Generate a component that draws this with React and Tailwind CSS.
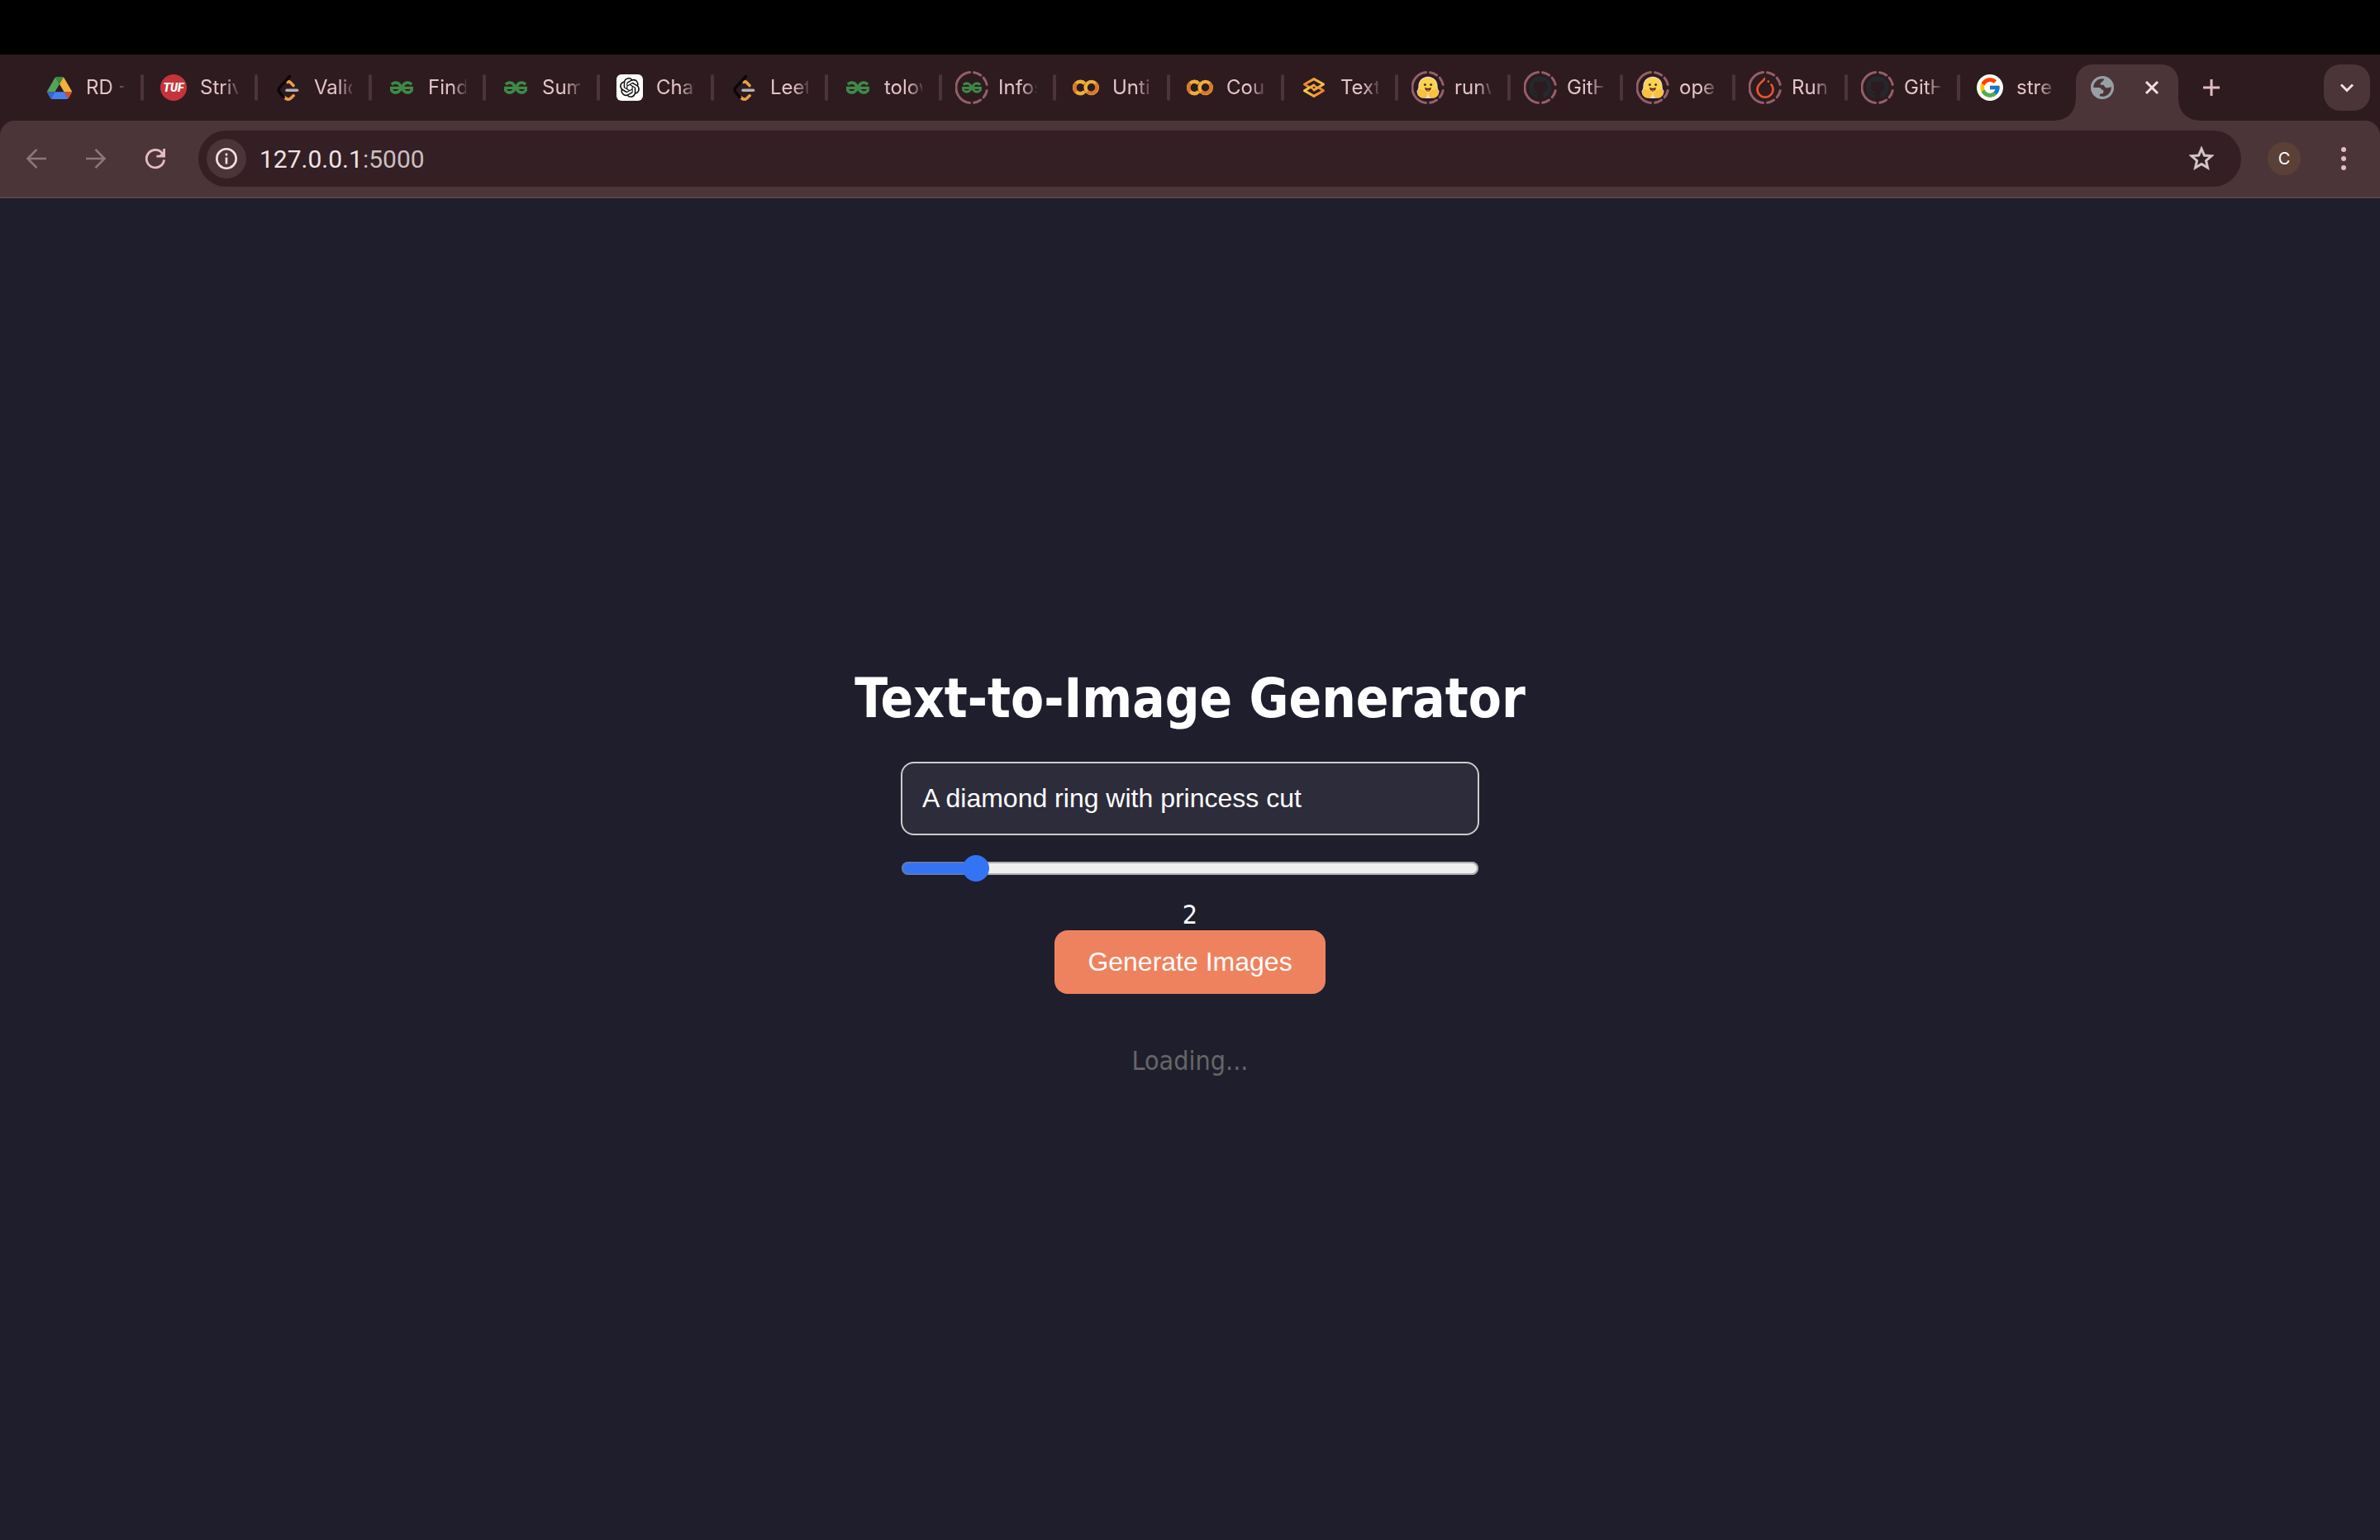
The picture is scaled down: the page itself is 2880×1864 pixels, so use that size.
import { useState } from "react";
import { SiGeeksforgeeks, SiOpenai, SiPytorch } from "react-icons/si";
import { FaGithub } from "react-icons/fa";
import { FcGoogle } from "react-icons/fc";

function DriveIcon() {
  return (
    <svg className="h-[27px] w-[30px]" viewBox="0 0 87.3 78" aria-hidden="true">
      <path d="m6.6 66.85 3.85 6.65c.8 1.4 1.95 2.5 3.3 3.3L27.5 53H0c0 1.55.4 3.1 1.2 4.5z" fill="#3367d6" />
      <path d="M43.65 25 29.9 1.2c-1.35.8-2.5 1.9-3.3 3.3L1.2 48.5A9.06 9.06 0 0 0 0 53h27.5z" fill="#55a35a" />
      <path d="M73.55 76.8c1.35-.8 2.5-1.9 3.3-3.3l9.25-16c.8-1.4 1.2-2.95 1.2-4.5H59.8l5.85 11.5z" fill="#d64c3b" />
      <path d="M43.65 25 57.4 1.2C56.05.4 54.5 0 52.9 0H34.4c-1.6 0-3.15.45-4.5 1.2z" fill="#3b8a4a" />
      <path d="M59.8 53H27.5L13.75 76.8c1.35.8 2.9 1.2 4.5 1.2h50.8c1.6 0 3.15-.45 4.5-1.2z" fill="#4a80ec" />
      <path d="m73.4 26.5-12.7-22c-.8-1.4-1.95-2.5-3.3-3.3L43.65 25 59.8 53h27.45c0-1.55-.4-3.1-1.2-4.5z" fill="#f0b23c" />
    </svg>
  );
}

function TufIcon() {
  return (
    <span className="flex size-8 items-center justify-center rounded-full bg-[#c4343a] font-[Roboto,sans-serif] text-[14px] leading-none font-black text-white italic">
      TUF
    </span>
  );
}

function LeetIcon() {
  return (
    <svg className="size-8" viewBox="0 0 32 32" fill="none" strokeLinecap="round" strokeLinejoin="round" aria-hidden="true">
      <path d="M16 9.400c1.400-.9 2.400-.6 3.400.4l3.600 3.800" stroke="#eba03b" strokeWidth="3.600" />
      <path d="M12.600 28l1.200 1c2 1.600 4.200 1.600 6 0l3.300-3.200" stroke="#eba03b" strokeWidth="3.600" />
      <path d="M18.600 2.400 6.200 16c-1.400 1.700-1.400 3.800 0 5.600l5.200 6.200" stroke="#0c0607" strokeWidth="3.400" />
      <path d="M15 19.300h12.600" stroke="#b3b0b1" strokeWidth="3.600" />
    </svg>
  );
}

function GeeksIcon() {
  return <SiGeeksforgeeks className="size-7 stroke-[#3f8a47] stroke-1 text-[#3f8a47]" aria-hidden="true" />;
}

function ChatIcon() {
  return (
    <span className="flex size-8 items-center justify-center rounded-md bg-white">
      <SiOpenai className="size-6 text-[#111]" aria-hidden="true" />
    </span>
  );
}

function ColabIcon() {
  return (
    <svg className="size-8" viewBox="0 0 32 32" fill="none" strokeWidth="4.400" aria-hidden="true">
      <path d="M14.600 11.200a7.200 7.200 0 1 0 0 9.600" stroke="#efad39" />
      <path d="M4.400 10.900a7.200 7.200 0 0 0 0 10.200" stroke="#d9772c" />
      <circle cx="22.700" cy="16" r="7.100" stroke="#efad39" />
      <path d="M27.700 11a7.100 7.100 0 0 1-10 10" stroke="#d9772c" />
    </svg>
  );
}

function LayersIcon() {
  return (
    <svg className="size-8" viewBox="0 0 32 32" fill="none" strokeWidth="3" strokeLinejoin="round" strokeLinecap="round" aria-hidden="true">
      <defs>
        <linearGradient id="layers-top" x1="0" x2="1" y1="0" y2="0">
          <stop offset="0" stopColor="#ee7f2f" />
          <stop offset="1" stopColor="#f5c63f" />
        </linearGradient>
        <linearGradient id="layers-bottom" x1="0" x2="1" y1="0" y2="0">
          <stop offset="0" stopColor="#f6d040" />
          <stop offset="1" stopColor="#ec7a2d" />
        </linearGradient>
      </defs>
      <path d="M9.500 15.200 4.500 12 16 5.600 27.500 12 16 19" stroke="url(#layers-top)" />
      <path d="M22.500 16.600 27.500 19.800 16 26.400 4.500 19.800 16 13" stroke="url(#layers-bottom)" />
      <path d="m16 13.200 3.600 2.700-3.600 2.700-3.600-2.700z" stroke="#f0a437" strokeWidth="2" />
    </svg>
  );
}

function HuggingIcon() {
  return (
    <svg className="size-[28px]" viewBox="0 0 28 28" aria-hidden="true">
      <path d="M14 .8c6.600 0 11.600 5 11.600 11.600 0 2 .3 3.400 1.300 4.800 1 1.500.6 2.700-.1 3.500.3 1.600-.5 2.800-1.600 3.400-1.400 2.200-4.200 3.200-7.200 2.600-1.400.5-6.600.5-8 0-3 .6-5.800-.4-7.200-2.600-1.100-.6-1.900-1.800-1.600-3.400-.7-.8-1.100-2-.1-3.500 1-1.400 1.300-2.800 1.300-4.800C2.400 5.800 7.400.8 14 .8z" fill="#f0d9c0" />
      <circle cx="14" cy="12.600" r="10.700" fill="#fbd34c" />
      <path d="M3 16.600c1-1 2.500.2 3.600 1.800 1.300-1.400 2.600-.8 2.400.6 2 1.300 4.100 3.700 2.400 6.600-3.600 1.400-7.800.6-8.700-2.300-1.500-.9-1-2.200-.3-2.800-.8-1.500-.4-2.900.6-3.900z" fill="#f9c33c" stroke="#e99f35" strokeWidth=".5" />
      <path d="M25 16.600c-1-1-2.500.2-3.600 1.800-1.300-1.400-2.600-.8-2.400.6-2 1.300-4.100 3.700-2.400 6.600 3.600 1.400 7.800.6 8.700-2.300 1.500-.9 1-2.200.3-2.800.8-1.500.4-2.900-.6-3.900z" fill="#f9c33c" stroke="#e99f35" strokeWidth=".5" />
      <circle cx="10.400" cy="10.400" r="1.500" fill="#4a3a2c" />
      <circle cx="17.600" cy="10.400" r="1.500" fill="#4a3a2c" />
      <path d="M10.200 13.800c2.400 1.400 5.200 1.400 7.600 0 .2 3-1.600 4.900-3.800 4.900s-4-1.900-3.800-4.900z" fill="#5a2f2c" />
      <path d="M11.700 17.300c1.300-1.200 3.300-1.200 4.600 0-1.200 1.600-3.400 1.600-4.600 0z" fill="#ea5f50" />
    </svg>
  );
}

function GoogleIcon() {
  return (
    <span className="flex size-8 items-center justify-center rounded-full bg-white">
      <FcGoogle className="size-[28px]" aria-hidden="true" />
    </span>
  );
}

function GlobeIcon() {
  return (
    <svg className="size-7" viewBox="0 0 28 28" aria-hidden="true">
      <circle cx="14" cy="14" r="12.400" fill="none" stroke="#98a0a5" strokeWidth="3.200" />
      <path d="M16.500 2.500c-.5 2.300-1.500 3.700-3.300 4.800-1.200.8-1.700 1.900-1.500 3.400h3c1.500 0 1.600 1.600 2.600 2.700 1 1.200 2.700.7 4 .8 1.500.1 1.700-1 4.200-1.200A12 12 0 0 0 16.500 2.500z" fill="#98a0a5" />
      <path d="M2.500 14h6.700c2.800 0 3.400 1.500 4 2.600h1.300c1.600 1.600 1 4.300-.5 4.700-1.500.3-2.900 0-3.200.9v3.600A12.400 12.400 0 0 1 2.500 14z" fill="#98a0a5" />
    </svg>
  );
}

function SleepRing({ children }) {
  return (
    <span className="relative flex size-8 items-center justify-center">
      {children}
      <svg className="absolute -inset-1 size-10" viewBox="0 0 40 40" fill="none" stroke="#945f69" strokeWidth="3" strokeLinecap="round" aria-hidden="true">
        <path d="M17.500 1.600a18.500 18.500 0 0 0 0 36.800" />
        <path d="M22.600 1.700a18.500 18.500 0 0 1 8 3.300M34.200 8.200a18.500 18.500 0 0 1 4 8.200M38.200 23.600a18.500 18.500 0 0 1-4 8.200M30.600 35a18.500 18.500 0 0 1-8 3.300" />
      </svg>
    </span>
  );
}

function SleepGeeks() {
  return (
    <SleepRing>
      <SiGeeksforgeeks className="size-6 stroke-[#3f8a47] stroke-1 text-[#3f8a47]" aria-hidden="true" />
    </SleepRing>
  );
}

function SleepHugging() {
  return (
    <SleepRing>
      <HuggingIcon />
    </SleepRing>
  );
}

function SleepGithub() {
  return (
    <SleepRing>
      <FaGithub className="size-7 text-[#23292d]" aria-hidden="true" />
    </SleepRing>
  );
}

function SleepTorch() {
  return (
    <SleepRing>
      <SiPytorch className="size-[26px] text-[#e8532f]" aria-hidden="true" />
    </SleepRing>
  );
}

const wideTabs = [
  ["RD -", DriveIcon],
  ["Striv", TufIcon],
  ["Valid", LeetIcon],
  ["Find", GeeksIcon],
  ["Sum", GeeksIcon],
  ["Chat", ChatIcon],
  ["Leet", LeetIcon],
  ["tolow", GeeksIcon],
  ["Infos", SleepGeeks],
  ["Untit", ColabIcon],
  ["Cou", ColabIcon],
  ["Text", LayersIcon],
];

const narrowTabs = [
  ["runw", SleepHugging],
  ["GitH", SleepGithub],
  ["ope", SleepHugging],
  ["Run", SleepTorch],
  ["GitH", SleepGithub],
  ["stre", GoogleIcon],
];

function Tab({ title, Icon, width, divider = true }) {
  return (
    <div className={`flex h-20 shrink-0 items-center ${width}`}>
      <button type="button" className="flex min-w-0 flex-1 items-center gap-4 pr-5 pl-5 text-left">
        <span className="flex size-8 shrink-0 items-center justify-center">
          <Icon />
        </span>
        <span className="min-w-0 flex-1 overflow-hidden text-[24px] leading-8 whitespace-nowrap text-[#e4c3c9] [mask-image:linear-gradient(to_right,#000_62%,#0003)]">
          {title}
        </span>
      </button>
      <span className={divider ? "h-8 w-1 rounded-full bg-[#4b3539]" : "w-1"} />
    </div>
  );
}

function TabStrip() {
  return (
    <div className="flex h-20 items-center pr-3 pl-9">
      {wideTabs.map(([title, Icon]) => (
        <Tab key={title} title={title} Icon={Icon} width="w-[138px]" />
      ))}
      {narrowTabs.map(([title, Icon], i) => (
        <Tab key={i} title={title} Icon={Icon} width="w-[136px]" divider={i < 5} />
      ))}
      <div className="relative ml-1 flex h-[68px] w-[124px] shrink-0 items-center justify-between self-end rounded-t-[20px] bg-[#4b3539] px-[18px] pb-3 before:absolute before:bottom-0 before:-left-6 before:size-6 before:bg-[radial-gradient(circle_at_0_0,transparent_23px,#4b3539_24px)] after:absolute after:-right-6 after:bottom-0 after:size-6 after:bg-[radial-gradient(circle_at_100%_0,transparent_23px,#4b3539_24px)]">
        <GlobeIcon />
        <button type="button" aria-label="Close tab" className="flex size-7 items-center justify-center text-[#f1e0e3]">
          <svg className="size-5" viewBox="0 0 20 20" stroke="currentColor" strokeWidth="3" aria-hidden="true">
            <path d="m3 3 14 14M17 3 3 17" />
          </svg>
        </button>
      </div>
      <button type="button" aria-label="New tab" className="ml-3 flex size-14 shrink-0 items-center justify-center text-[#e4bcc3]">
        <svg className="size-5" viewBox="0 0 20 20" stroke="currentColor" strokeWidth="3" aria-hidden="true">
          <path d="M10 0v20M0 10h20" />
        </svg>
      </button>
      <button type="button" aria-label="Search tabs" className="ml-auto flex size-14 shrink-0 items-center justify-center rounded-[20px] bg-[#4b3539] text-[#f1e0e3]">
        <svg className="size-5" viewBox="0 0 20 20" fill="none" stroke="currentColor" strokeWidth="3" aria-hidden="true">
          <path d="m3 6.500 7 7 7-7" />
        </svg>
      </button>
    </div>
  );
}

function ToolButton({ label, tone, children }) {
  return (
    <button type="button" aria-label={label} className={`flex size-14 shrink-0 items-center justify-center ${tone}`}>
      {children}
    </button>
  );
}

function Toolbar() {
  return (
    <div className="flex h-[94px] items-center rounded-t-[18px] border-b-2 border-[#55474b] bg-[#4b3539] px-4">
      <div className="flex gap-4">
        <ToolButton label="Back" tone="text-[#8c777b]">
          <svg className="size-7" viewBox="0 0 28 28" fill="none" stroke="currentColor" strokeWidth="2.600" aria-hidden="true">
            <path d="M26 14H4M14.500 2.800 3.500 14l11 11.200" />
          </svg>
        </ToolButton>
        <ToolButton label="Forward" tone="text-[#8c777b]">
          <svg className="size-7" viewBox="0 0 28 28" fill="none" stroke="currentColor" strokeWidth="2.600" aria-hidden="true">
            <path d="M2 14h22M13.500 2.800l11 11.200-11 11.200" />
          </svg>
        </ToolButton>
        <ToolButton label="Reload" tone="text-[#e4bcc3]">
          <svg className="size-7" viewBox="0 0 28 28" fill="none" stroke="currentColor" strokeWidth="2.800" aria-hidden="true">
            <path d="M24.600 15.300a10.700 10.700 0 1 1-2.600-8.200l2.600 3.600" />
            <path d="M24.600 2v9.200h-9.200" />
            <path d="M24.600 4.500v6.700h-7" fill="currentColor" stroke="none" />
          </svg>
        </ToolButton>
      </div>
      <div className="ml-6 flex h-[68px] min-w-0 flex-1 items-center rounded-full bg-[#331f24] pr-6 pl-[10px]">
        <button type="button" aria-label="View site information" className="flex size-12 shrink-0 items-center justify-center rounded-full bg-[#4b3539] text-[#f1e0e3]">
          <svg className="size-7" viewBox="0 0 28 28" fill="none" stroke="currentColor" strokeWidth="2.600" aria-hidden="true">
            <circle cx="14" cy="14" r="11.700" />
            <path d="M14 12.500v8M14 7.500v3" />
          </svg>
        </button>
        <p className="ml-4 flex-1 pt-0.5 text-[30px] leading-9 font-[Roboto,sans-serif] text-[#efe3e5]">
          127.0.0.1<span className="text-[#cbbec0]">:5000</span>
        </p>
        <button type="button" aria-label="Bookmark this tab" className="flex size-12 items-center justify-center text-[#d6c8cb]">
          <svg className="size-9" viewBox="0 0 24 24" fill="currentColor" stroke="currentColor" strokeWidth=".4" aria-hidden="true">
            <path d="m22 9.240-7.190-.620L12 2 9.190 8.630 2 9.240l5.460 4.730L5.820 21 12 17.270 18.180 21l-1.630-7.030L22 9.240zM12 15.400l-3.760 2.270 1-4.280-3.320-2.880 4.380-.380L12 6.100l1.710 4.040 4.380.380-3.320 2.880 1 4.280L12 15.400z" />
          </svg>
        </button>
      </div>
      <div className="ml-6 flex gap-4">
        <ToolButton label="Profile" tone="text-white">
          <span className="flex size-10 items-center justify-center rounded-full bg-[#5b4038] text-[20px] leading-none">C</span>
        </ToolButton>
        <ToolButton label="Menu" tone="text-[#e4bcc3]">
          <svg className="size-8" viewBox="0 0 32 32" fill="currentColor" aria-hidden="true">
            <circle cx="16" cy="5" r="3" />
            <circle cx="16" cy="16" r="3" />
            <circle cx="16" cy="27" r="3" />
          </svg>
        </ToolButton>
      </div>
    </div>
  );
}

function Generator() {
  const [prompt, setPrompt] = useState("A diamond ring with princess cut");
  const [count, setCount] = useState(2);
  const ratio = (count - 1) / 9;

  return (
    <main className="flex flex-1 flex-col items-center justify-center pt-[6px] text-[32px] text-white">
      <h1 className="text-[65px] leading-[78px] font-bold">Text-to-Image Generator</h1>
      <input
        type="text"
        aria-label="Prompt"
        value={prompt}
        onChange={(e) => setPrompt(e.target.value)}
        className="mt-[37px] h-[89px] w-[700px] rounded-2xl border-2 border-[#ccc] bg-[#2d2c3b] px-6 font-['Liberation_Sans',Arial,sans-serif] outline-none"
      />
      <input
        type="range"
        id="count"
        aria-label="Number of images"
        min="1"
        max="10"
        value={count}
        onChange={(e) => setCount(Number(e.target.value))}
        style={{ "--fill": `calc(16px + (100% - 32px) * ${ratio})` }}
        className="mt-6 h-8 w-[698px] appearance-none bg-transparent [&::-webkit-slider-runnable-track]:h-4 [&::-webkit-slider-runnable-track]:rounded-full [&::-webkit-slider-runnable-track]:bg-[linear-gradient(to_right,#3374f5_var(--fill),#efefef_var(--fill))] [&::-webkit-slider-runnable-track]:shadow-[inset_0_0_0_2px_#80808099] [&::-webkit-slider-thumb]:-mt-2 [&::-webkit-slider-thumb]:size-8 [&::-webkit-slider-thumb]:appearance-none [&::-webkit-slider-thumb]:rounded-full [&::-webkit-slider-thumb]:bg-[#3374f5]"
      />
      <output htmlFor="count" className="mt-[22px] block leading-[37px]">
        {count}
      </output>
      <button
        type="button"
        className="h-[77px] rounded-2xl bg-[#ee825f] px-10 font-['Liberation_Sans',Arial,sans-serif]"
      >
        Generate Images
      </button>
      <p className="mt-[62px] leading-[39px] text-[#666]">Loading...</p>
    </main>
  );
}

export default function App() {
  return (
    <div className="flex min-h-screen flex-col bg-[#1f1e2d] font-['DejaVu_Sans_Condensed','Noto_Sans',sans-serif]">
      <header className="bg-[#2d1b1f] font-[Inter,sans-serif]">
        <div className="h-[66px] bg-black" />
        <TabStrip />
        <Toolbar />
      </header>
      <Generator />
    </div>
  );
}
